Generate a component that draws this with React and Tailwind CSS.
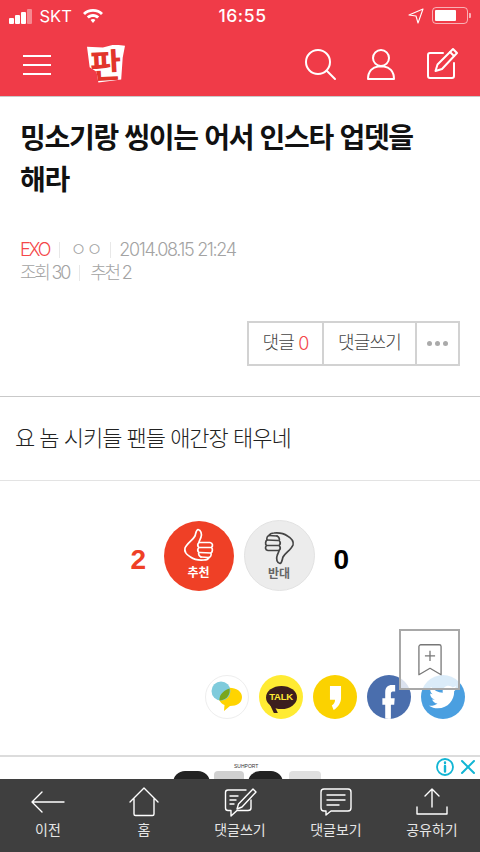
import { FaTwitter } from "react-icons/fa"

const kr = "font-['Liberation_Sans','Noto_Sans_CJK_KR',sans-serif]"

function Thumb({ color, flip }) {
    return <svg width="36" height="38" viewBox="0 0 36 38" fill="none" stroke={color} strokeWidth="1.700" strokeLinejoin="round" strokeLinecap="round" className={flip ? "rotate-180" : ""}>
        <path d="M4 21C6 16 12 13 14 9C15 6 15 3 17 2.500C20 3 21 7 20 10C19.500 12 18 14 18 15.500L29 15.500C32 16 32 19 30.500 20.500C32 22 31.500 25 30 26C30.500 28 29.500 30 28 30.500C27 32.500 25 33 23 33C18 33.500 13 32.500 9.500 30C6 28 3 25 4 21Z" />
        <path d="M19 20.500L30 20.500M19 25.500L30 26M20 30L28 30.500" />
        <path d="M18 15.500C16.500 17 16.500 19 18 20.500C16.500 22 16.500 24 18 25.500C17 27 18 29 20 30" />
    </svg>
}

function NavIcon({ children }) {
    return <svg width="34" height="34" viewBox="0 0 34 34" fill="none" stroke="white" strokeWidth="2" strokeLinecap="round" strokeLinejoin="round">{children}</svg>
}

function BarItem({ label, children }) {
    return <div className="flex w-[96px] flex-col items-center">
        <svg width="40" height="32" viewBox="0 0 40 32" fill="none" stroke="white" strokeWidth="1.400" strokeLinecap="round" strokeLinejoin="round">{children}</svg>
        <span className="mt-[1px] text-[14px] leading-[20px] text-[#e6e6e6]">{label}</span>
    </div>
}

export default function App() {
    return <div className={`relative flex h-[852px] w-[480px] flex-col overflow-hidden bg-white ${kr}`}>
        {/* status bar + nav */}
        <div className="h-[97px] shrink-0 border-b border-[#c9c9c9] bg-[#f03b48] text-white">
            <div className="flex h-[31px] items-center justify-between pl-[9px] pr-[9px] font-['Inter',sans-serif]">
                <div className="flex w-[150px] items-center">
                    <div className="flex items-end gap-[1.500px] pt-[1px]">
                        <div className="h-[6px] w-[4.500px] rounded-[1px] bg-white"></div>
                        <div className="h-[9px] w-[4.500px] rounded-[1px] bg-white"></div>
                        <div className="h-[12px] w-[4.500px] rounded-[1px] bg-white"></div>
                        <div className="h-[15px] w-[4.500px] rounded-[1px] bg-white/40"></div>
                    </div>
                    <span className="ml-[8px] text-[16.500px] font-normal leading-[20px]">SKT</span>
                    <svg width="22" height="16" viewBox="0 0 22 16" fill="white" className="ml-[10px]">
                        <path d="M11 1C7 1 3.500 2.500 1 5L3 7C5 5 8 3.800 11 3.800C14 3.800 17 5 19 7L21 5C18.500 2.500 15 1 11 1Z" />
                        <path d="M11 6C8.500 6 6.300 7 4.800 8.500L6.800 10.500C7.800 9.500 9.300 8.900 11 8.900C12.700 8.900 14.200 9.500 15.200 10.500L17.200 8.500C15.700 7 13.500 6 11 6Z" />
                        <path d="M11 11C10 11 9.200 11.400 8.600 12L11 15L13.400 12C12.800 11.400 12 11 11 11Z" />
                    </svg>
                </div>
                <span className="ml-[5px] text-[17.500px] font-medium leading-[20px] tracking-[0.6px]">16:55</span>
                <div className="flex w-[150px] items-center justify-end">
                    <svg width="16" height="16" viewBox="0 0 16 16" fill="none" stroke="white" strokeWidth="1.100" strokeLinejoin="round" className="mr-[8px]">
                        <path d="M15 1L1 7L8 8L10 15Z" />
                    </svg>
                    <div className="h-[17px] w-[36px] rounded-[4px] border border-white/60 p-[2px]">
                        <div className="h-full w-[21px] rounded-[1px] bg-white"></div>
                    </div>
                    <div className="ml-[1px] h-[5px] w-[2px] rounded-r-[1px] bg-white/60"></div>
                </div>
            </div>
            <div className="flex h-[65px] items-center pl-[23px] pr-[21px]">
                <div className="flex w-[28px] flex-col gap-[7px] pt-[3px]">
                    <div className="h-[2px] bg-white"></div>
                    <div className="h-[2px] bg-white"></div>
                    <div className="h-[2px] bg-white"></div>
                </div>
                {/* logo: cut-out paper letter */}
                <div className="ml-[36px] flex h-[38px] w-[38px] items-center justify-center bg-white [clip-path:polygon(0_6%,42%_8%,72%_0,100%_3%,94%_34%,90%_92%,30%_100%,25%_72%,7%_60%)]">
                    <span className="-rotate-3 font-['Noto_Sans_CJK_KR',sans-serif] text-[34px] font-bold leading-[38px] text-[#e2352b]">판</span>
                </div>
                <div className="ml-auto flex items-center gap-[27px]">
                    <NavIcon>
                        <circle cx="15" cy="15" r="12" />
                        <path d="M24 24L32 32" />
                    </NavIcon>
                    <NavIcon>
                        <circle cx="17" cy="11" r="8" />
                        <path d="M4 32C4 24 9 20 14 19.500L20 19.500C25 20 30 24 30 32Z" />
                    </NavIcon>
                    <NavIcon>
                        <path d="M18 6L5 6C3.500 6 3 6.500 3 8L3 29C3 30.500 3.500 31 5 31L27 31C28.500 31 29 30.500 29 29L29 16" />
                        <path d="M28 2L32 6L17 22L10.500 24L12.500 17.500Z" />
                        <path d="M25 5L29 9" />
                    </NavIcon>
                </div>
            </div>
        </div>

        {/* article head */}
        <h1 className="mt-[21px] px-[20px] text-[28px] font-bold leading-[42px] tracking-[-1.300px] text-[#111]">밍소기랑 씽이는 어서 인스타 업뎃을<br />해라</h1>
        <div className="mt-[36px] px-[20px] font-['Inter','Noto_Sans_CJK_KR',sans-serif] text-[18px] font-light leading-[23px] tracking-[-1.350px] text-[#a3a3a3]">
            <div className="flex items-center">
                <span className="tracking-[-2.200px] text-[#f4474a]">EXO</span>
                <div className="mx-[10px] h-[16px] w-px bg-[#e8e8e8]"></div>
                <span className="tracking-[-0.500px]">ㅇㅇ</span>
                <div className="mx-[8px] h-[16px] w-px bg-[#e8e8e8]"></div>
                <span>2014.08.15 21:24</span>
            </div>
            <div className="flex items-center tracking-[-2.200px]">
                <span>조회 30</span>
                <div className="mx-[10px] h-[16px] w-px bg-[#e8e8e8]"></div>
                <span>추천 2</span>
            </div>
        </div>

        <div className="mt-[37px] flex justify-end pr-[20px]">
            <div className="flex h-[45px] border-2 border-[#d2d2d2] text-[18px] font-light tracking-[-0.800px] text-[#444]">
                <div className="flex w-[75px] items-center justify-center border-r-2 border-[#d2d2d2]">댓글&nbsp;<span className="font-['Inter',sans-serif] text-[#f4474a]">0</span></div>
                <div className="flex w-[93px] items-center justify-center border-r-2 border-[#d2d2d2]">댓글쓰기</div>
                <div className="flex w-[41px] items-center justify-center gap-[3px]">
                    <div className="h-[5px] w-[5px] rounded-full bg-[#aaa]"></div>
                    <div className="h-[5px] w-[5px] rounded-full bg-[#aaa]"></div>
                    <div className="h-[5px] w-[5px] rounded-full bg-[#aaa]"></div>
                </div>
            </div>
        </div>

        {/* body */}
        <div className="mt-[30px] flex h-[85px] items-center border-y border-y-[#e3e3e3] border-t-[#c9c9c9] pl-[15px] text-[22px] font-light tracking-[-1px] text-[#222]">요 놈 시키들 팬들 애간장 태우네</div>

        {/* vote */}
        <div className="mt-[39px] flex items-center justify-center pl-[9px]">
            <span className="w-[33px] pt-[8px] font-['Liberation_Sans',sans-serif] text-[28px] font-bold text-[#ef4026]">2</span>
            <div className="flex h-[70px] w-[70px] flex-col items-center rounded-full bg-[#ef4026] pt-[6px]">
                <Thumb color="white" />
                <span className="text-[12px] font-bold leading-[16px] text-white">추천</span>
            </div>
            <div className="ml-[10px] flex h-[71px] w-[71px] flex-col items-center rounded-full border border-[#e2e2e2] bg-[#ececec] pt-[7px]">
                <Thumb color="#444" flip />
                <span className="text-[12px] font-bold leading-[16px] text-[#666]">반대</span>
            </div>
            <span className="ml-[19px] w-[25px] pt-[8px] font-['Liberation_Sans',sans-serif] text-[28px] font-bold text-black">0</span>
        </div>

        {/* share */}
        <div className="mt-[84px] flex justify-end gap-[10px] pr-[15px]">
            <div className="flex h-[44px] w-[44px] items-center justify-center rounded-full border border-[#eeeeee] bg-white">
                <svg width="36" height="36" viewBox="0 0 36 36">
                    <path d="M18 9C26 8 33 12 33 18C33 24 28 27 21 27L15 32L15.500 26C11 24 9 20 10 16C11 12 14 10 18 9Z" fill="#ffd400" />
                    <circle cx="12" cy="12" r="9.500" fill="#7fcbdc" />
                    <path d="M10.500 21.400C10 17 13 12 20.500 9.500C21.500 14 19 21 10.500 21.400Z" fill="#7aa61c" />
                </svg>
            </div>
            <div className="flex h-[44px] w-[44px] items-center justify-center rounded-full bg-[#ffeb33]">
                <div className="relative flex h-[23px] w-[31px] items-center justify-center rounded-[50%] bg-[#3c1e1e] text-[9.500px] font-bold tracking-[-0.300px] text-[#ffeb33]">
                    TALK
                    <div className="absolute bottom-[-4px] left-[6px] h-[8px] w-[4px] skew-x-[25deg] bg-[#3c1e1e]"></div>
                </div>
            </div>
            <div className="flex h-[44px] w-[44px] items-center justify-center rounded-full bg-[#fbd200]">
                <svg width="13" height="24" viewBox="0 0 14 26" fill="white" className="mt-[2px]">
                    <path d="M1 0L13 0L13 13C13 18 10 23 5 26L3 21C5 20 6.500 18 6.500 15L1 15Z" />
                </svg>
            </div>
            <div className="flex h-[44px] w-[44px] items-end justify-center overflow-hidden rounded-full bg-[#4a6ead]">
                <svg width="18" height="36" viewBox="0 0 18 38" fill="white">
                    <path d="M5 38L5 23L2 23L2 16L5 16L5 10C5 4 8 2 12 2L15.500 2L15.500 9L13 9C11.500 9 11 10 11 11.500L11 16L15 16L14.500 23L11 23L11 38Z" />
                </svg>
            </div>
            <div className="flex h-[44px] w-[44px] items-center justify-center rounded-full bg-[#4a9fe0] text-white">
                <FaTwitter size={28} />
            </div>
        </div>

        {/* ad */}
        <div className="relative mt-[36px] h-[32px] shrink-0 border-t-2 border-[#dcdcdc] bg-white">
            <div className="absolute left-[234px] top-[5px] text-[5px] leading-[8px] text-[#333]">SUHPORT</div>
            <div className="absolute left-[173px] top-[14px] flex gap-[4px]">
                <div className="h-[12px] w-[37px] rounded-t-[12px] bg-[#222] blur-[0.5px]"></div>
                <div className="h-[12px] w-[30px] rounded-t-[4px] bg-[#d0d0d0] blur-[0.5px]"></div>
                <div className="h-[12px] w-[35px] rounded-t-[12px] bg-[#222] blur-[0.5px]"></div>
                <div className="ml-[2px] h-[12px] w-[32px] rounded-t-[4px] bg-[#e0e0e0] blur-[0.5px]"></div>
            </div>
            <svg width="44" height="20" viewBox="0 0 44 20" fill="none" stroke="#12b5d4" strokeWidth="1.800" strokeLinecap="round" className="absolute right-[0px] top-[0px]">
                <circle cx="9" cy="10" r="8" />
                <path d="M9 9L9 14.500M9 5.500L9 6" strokeWidth="2.400" />
                <path d="M26 4L38 16M38 4L26 16" strokeWidth="2" />
            </svg>
        </div>

        {/* bottom bar */}
        <div className="absolute inset-x-0 bottom-0 flex h-[73px] bg-[#3f3f3f] pt-[8px]">
            <BarItem label="이전">
                <path d="M4 15L36 15M4 15L14 5M4 15L14 25" />
            </BarItem>
            <BarItem label="홈">
                <path d="M6 15L20 1L34 15M10 12L10 27C10 28 10.500 28.500 11.500 28.500L28.500 28.500C29.500 28.500 30 28 30 27L30 12" />
            </BarItem>
            <BarItem label="댓글쓰기">
                <path d="M26 3L8 3C6 3 5.500 3.500 5.500 5.500L5.500 21C5.500 23 6 23.500 8 23.500L11 23.500L11 29L17 23.500L28 23.500C30 23.500 31 23 31 21L31 13" />
                <path d="M10 9L18 9M10 13L16 13M10 17L14 17" />
                <path d="M33 2L36 5L22 20L17 22L18.500 17Z" />
            </BarItem>
            <BarItem label="댓글보기">
                <path d="M8 2L32 2C34 2 35 3 35 5L35 21C35 23 34 24 32 24L15 24L10 28L10 24L8 24C6 24 5 23 5 21L5 5C5 3 6 2 8 2Z" />
                <path d="M11 8L29 8M11 13L29 13M11 18L23 18" />
            </BarItem>
            <BarItem label="공유하기">
                <path d="M20 20L20 2M13 9L20 2L27 9M5 20L5 27L35 27L35 20" />
            </BarItem>
        </div>

        {/* bookmark float */}
        <div className="absolute left-[399px] top-[629px] flex h-[61px] w-[61px] items-center justify-center border-2 border-[#a8a8a8] bg-white/80">
            <svg width="24" height="34" viewBox="0 0 26 36" fill="none" stroke="#777" strokeWidth="1.400" strokeLinejoin="round">
                <path d="M3 1.500L23 1.500C24 1.500 25 2.500 25 3.500L25 34L13 27L1 34L1 3.500C1 2.500 2 1.500 3 1.500Z" />
                <path d="M13 8L13 19M7.500 13.500L18.500 13.500" />
            </svg>
        </div>
    </div>
}
